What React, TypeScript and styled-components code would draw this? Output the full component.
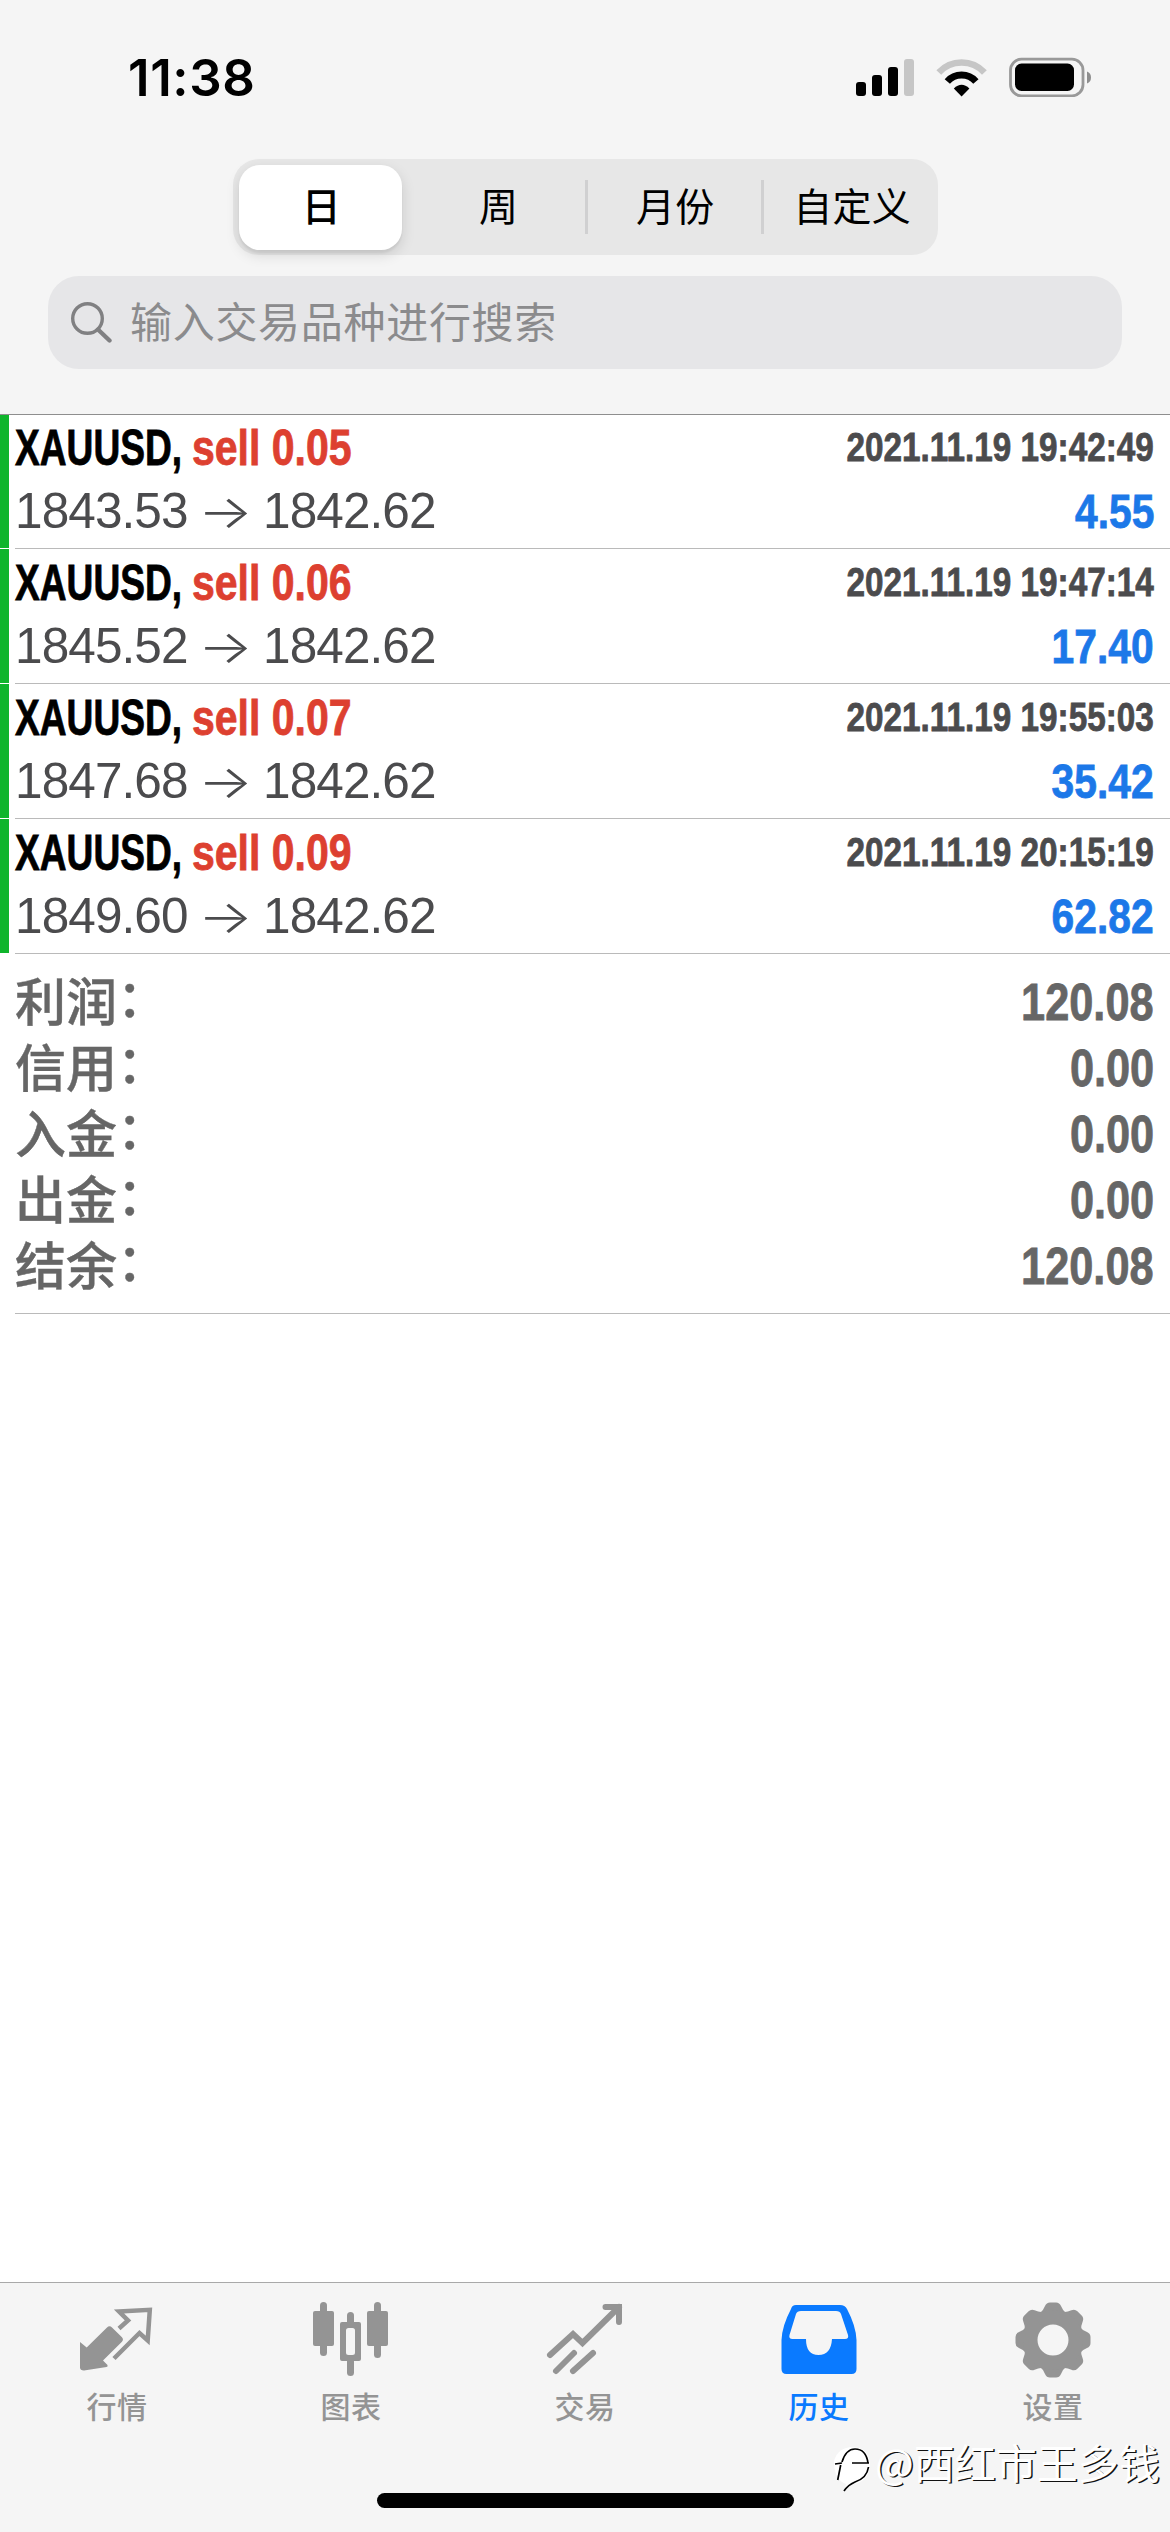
import React from "react";
import styled, { createGlobalStyle } from "styled-components";

const Global = createGlobalStyle`
  * { box-sizing: border-box; }
  body { margin: 0; background: #fff; }
`;

const latin = `"Liberation Sans", "Noto Sans CJK SC", sans-serif`;
const cjk = `"Noto Sans CJK SC", sans-serif`;

const Screen = styled.div`
  width: 1170px;
  height: 2532px;
  display: flex;
  flex-direction: column;
  background: #fff;
  font-family: ${cjk};
  overflow: hidden;
`;

const Header = styled.header`
  height: 414px;
  flex: none;
  display: flex;
  flex-direction: column;
  background: #f5f5f5;
  box-shadow: 0 1px 0 #8e8e8e;
  z-index: 1;
`;

const StatusBar = styled.div`
  height: 159px;
  padding: 46px 79px 0 128px;
  display: flex;
  justify-content: space-between;
  align-items: flex-start;
`;

const Clock = styled.span`
  font: 600 51px/64px Inter, sans-serif;
  letter-spacing: 0.6px;
  color: #000;
`;

const StatusIcons = styled.svg`
  width: 236px;
  height: 40px;
  margin-top: 11px;
`;

const Segments = styled.nav`
  width: 705px;
  height: 96px;
  margin-left: 233px;
  padding: 5px 6px;
  display: flex;
  align-items: center;
  background: #e7e7e7;
  border-radius: 26px;
`;

const Segment = styled.button<{ $active?: boolean; $width: number }>`
  width: ${(p) => p.$width}px;
  height: 85px;
  padding: 0 0 6px 2px;
  border: 0;
  border-radius: 21px;
  background: ${(p) => (p.$active ? "#fff" : "transparent")};
  box-shadow: ${(p) => (p.$active ? "0 5px 14px rgba(0,0,0,.13), 0 3px 2px rgba(0,0,0,.05)" : "none")};
  font: ${(p) => (p.$active ? 500 : 400)} 39px/79px ${cjk};
  letter-spacing: 0.3px;
  color: #000;
`;

const Divider = styled.i<{ $hidden?: boolean }>`
  width: 3px;
  height: 54px;
  margin: 0 6px;
  background: ${(p) => (p.$hidden ? "transparent" : "#d0d0d1")};
`;

const Search = styled.div`
  width: 1074px;
  height: 93px;
  margin: 21px 0 0 48px;
  padding-left: 23px;
  display: flex;
  align-items: center;
  gap: 18px;
  background: #e6e6e8;
  border-radius: 31px;
`;

const Placeholder = styled.span`
  padding-bottom: 6px;
  font-size: 42px;
  letter-spacing: 0.7px;
  color: #8b8b8d;
`;

const Deals = styled.main`
  flex: 1;
`;

const Deal = styled.section`
  height: 135px;
  padding: 6px 16px 0 15px;
  background:
    linear-gradient(#0fb52c, #0fb52c) left top / 9px 134px no-repeat,
    linear-gradient(#bababa, #bababa) left 15px bottom 0 / 100% 1px no-repeat;
  font-family: ${latin};
`;

const DealLine = styled.div<{ $h: number }>`
  height: ${(p) => p.$h}px;
  display: flex;
  align-items: baseline;
`;

const Squeeze = styled.span<{ $size: number; $x: number; $color: string; $w?: number; $end?: boolean; $lift?: number }>`
  display: block;
  width: ${(p) => (p.$w ? `${p.$w}px` : "auto")};
  margin-left: ${(p) => (p.$end ? "auto" : "0")};
  font: 700 ${(p) => p.$size}px/56px ${latin};
  color: ${(p) => p.$color};
  -webkit-text-stroke: 0.8px ${(p) => p.$color};
  white-space: nowrap;
  transform: translateY(${(p) => -(p.$lift ?? 0)}px) scaleX(${(p) => p.$x});
  transform-origin: ${(p) => (p.$end ? "right" : "left")} center;
`;

const Price = styled.span`
  width: 173px;
  font-size: 49.5px;
  line-height: 56px;
  letter-spacing: -0.9px;
  color: #4b4b4d;
`;

const Arrow = styled.span`
  width: 75px;
  text-align: center;
  font: 300 46px/56px Inter, sans-serif;
  color: #4b4b4d;
  transform: scaleX(1.25);
`;

const Summary = styled.section`
  height: 360px;
  margin-left: 15px;
  padding: 15px 16px 0 0;
  border-bottom: 1px solid #bababa;
`;

const SummaryRow = styled.div`
  height: 66px;
  display: flex;
  align-items: center;
`;

const SummaryLabel = styled.span`
  padding-top: 3px;
  font: 500 51px/60px ${latin};
  color: #666;
  -webkit-text-stroke: 0.4px #666;
`;

const Colon = styled.span`
  display: inline-block;
  transform: translate(0, -4px);
`;

const TabBar = styled.footer`
  height: 250px;
  flex: none;
  display: flex;
  flex-direction: column;
  align-items: center;
  justify-content: space-between;
  padding-bottom: 24px;
  border-top: 1px solid #a9a9a9;
  background: #f5f5f5;
`;

const Tabs = styled.nav`
  width: 100%;
  display: grid;
  grid-template-columns: repeat(5, 1fr);
`;

const Tab = styled.a<{ $active?: boolean }>`
  padding-top: 17px;
  display: flex;
  flex-direction: column;
  align-items: center;
  color: ${(p) => (p.$active ? "#0a7aff" : "#949494")};
  font: 500 30px/44px ${cjk};
  letter-spacing: 0.6px;

  svg { width: 80px; height: 80px; margin-bottom: 3px; }
`;

const HomeIndicator = styled.div`
  width: 417px;
  height: 15px;
  border-radius: 8px;
  background: #000;
`;

const Watermark = styled.div`
  position: absolute;
  left: 830px;
  top: 2434px;
  display: flex;
  align-items: flex-start;
  gap: 3px;
  font: 400 41px/54px ${cjk};
  color: #fff;
  text-shadow: 1.4px 1.4px 0 #111;
  white-space: nowrap;
`;

const segments = [
  { label: "日", width: 163 },
  { label: "周", width: 162 },
  { label: "月份", width: 162 },
  { label: "自定义", width: 162 },
];

const deals = [
  { lot: "0.05", time: "2021.11.19 19:42:49", open: "1843.53", profit: "4.55" },
  { lot: "0.06", time: "2021.11.19 19:47:14", open: "1845.52", profit: "17.40" },
  { lot: "0.07", time: "2021.11.19 19:55:03", open: "1847.68", profit: "35.42" },
  { lot: "0.09", time: "2021.11.19 20:15:19", open: "1849.60", profit: "62.82" },
];

const totals = [
  ["利润", "120.08"],
  ["信用", "0.00"],
  ["入金", "0.00"],
  ["出金", "0.00"],
  ["结余", "120.08"],
];

const QuotesIcon = () => (
  <svg viewBox="0 0 80 80" fill="currentColor">
    <path d="M3 42 9.700 47.500 30 27.500q2.500-2.500 5 0L44.700 37q2.500 2.500 0 5L26 60.500l4.500 4.500q.5 2-1 2L7 70.500q-4 0-4-3Z" />
    <path d="M42 28.500 51 20.500 42 11.500 72.800 9.800 70.700 40.500 62.500 33 37 58.500" fill="none" stroke="currentColor" strokeWidth="4.500" />
  </svg>
);

const ChartIcon = () => (
  <svg viewBox="0 0 80 80" fill="currentColor">
    <rect x="2" y="11" width="21" height="35" rx="2" />
    <rect x="9" y="2" width="7" height="54" rx="3.500" />
    <rect x="56" y="11" width="21" height="35" rx="2" />
    <rect x="63" y="2" width="7" height="56" rx="3.500" />
    <rect x="36" y="12" width="7" height="14" rx="3.500" />
    <rect x="36" y="58" width="7" height="18" rx="3.500" />
    <path fillRule="evenodd" d="M31 22H48a2 2 0 0 1 2 2V59a2 2 0 0 1-2 2H31a2 2 0 0 1-2-2V24a2 2 0 0 1 2-2ZM37.500 28a2.500 2.500 0 0 0-2.500 2.500V52.500a2.500 2.500 0 0 0 2.500 2.500h4a2.500 2.500 0 0 0 2.500-2.500V30.500a2.500 2.500 0 0 0-2.500-2.500Z" />
  </svg>
);

const TradeIcon = () => (
  <svg viewBox="0 0 80 80" fill="none" stroke="currentColor" strokeWidth="6" strokeLinecap="round">
    <path d="M5 55 28 34 37.500 43 74 7M60.500 7H74V22" />
    <path d="M11 71 29 53M28 71 48 53" />
  </svg>
);

const HistoryIcon = () => (
  <svg viewBox="0 0 80 80" fill="currentColor">
    <path fillRule="evenodd" d="M17 5H61q5 0 7 4Q77 26 77.500 40V69q0 5-5 5H7.500q-5 0-5-5V40Q3 26 12 9q1-4 5-4ZM22 11q-4 0-5 3L10.500 35q-1 4 3 4H27Q27 55 39.500 55T53 39H66q4 0 3-4L62 14q-1-3-5-3Z" />
  </svg>
);

const SettingsIcon = () => (
  <svg viewBox="-40 -40 80 80" fill="currentColor">
    {[0, 45, 90, 135, 180, 225, 270, 315].map((a) => (
      <path key={a} transform={`rotate(${a})`} d="M-13-27Q-10-29-8-34-6.500-37.500-3-37.500H3Q6.500-37.500 8-34 10-29 13-27Z" />
    ))}
    <path fillRule="evenodd" d="M0-30A30 30 0 1 0 0 30 30 30 0 1 0 0-30ZM0-15.500A15.500 15.500 0 1 1 0 15.500 15.500 15.500 0 1 1 0-15.500Z" />
  </svg>
);

const tabs = [
  { label: "行情", Icon: QuotesIcon },
  { label: "图表", Icon: ChartIcon },
  { label: "交易", Icon: TradeIcon },
  { label: "历史", Icon: HistoryIcon },
  { label: "设置", Icon: SettingsIcon },
];

export default function App() {
  return (
    <Screen>
      <Global />
      <Header>
        <StatusBar>
          <Clock>11:38</Clock>
          <StatusIcons viewBox="855 57 236 40">
            <rect x="856" y="82" width="10" height="14" rx="3" />
            <rect x="872" y="75" width="10" height="21" rx="3" />
            <rect x="888" y="67" width="10" height="29" rx="3" />
            <rect x="904" y="59" width="10" height="37" rx="3" fill="#c6c6c6" />
            <path d="M938.800 72.500A31 31 0 0 1 984.400 72.500" fill="none" stroke="#c6c6c6" strokeWidth="6.500" />
            <path d="M947.300 81.500A19 19 0 0 1 975.900 81.500" fill="none" stroke="#000" strokeWidth="7" />
            <path d="M953.800 88.500Q961.600 81 969.400 88.500L961.600 96.500Z" />
            <rect x="1010.500" y="59.200" width="72.500" height="36.600" rx="11" fill="none" stroke="#999" strokeWidth="2.800" />
            <rect x="1015" y="63.500" width="59" height="27.500" rx="6.500" />
            <path d="M1087 71.500Q1091 73 1091 77.500T1087 83.500Z" fill="#8e8e8e" />
          </StatusIcons>
        </StatusBar>
        <Segments>
          {segments.map((s, i) => (
            <React.Fragment key={s.label}>
              {i > 0 && <Divider $hidden={i === 1} />}
              <Segment $width={s.width} $active={i === 0}>{s.label}</Segment>
            </React.Fragment>
          ))}
        </Segments>
        <Search>
          <svg width="41" height="41" viewBox="0 0 41 41" fill="none" stroke="#808082">
            <circle cx="16.500" cy="16.500" r="14.800" strokeWidth="3.400" />
            <path d="M27 27.500 38.500 38.500" strokeWidth="4.400" strokeLinecap="round" />
          </svg>
          <Placeholder>输入交易品种进行搜索</Placeholder>
        </Search>
      </Header>

      <Deals>
        {deals.map((d) => (
          <Deal key={d.time}>
            <DealLine $h={63}>
              <Squeeze $size={49.5} $x={0.75} $w={177} $color="#000">XAUUSD,</Squeeze>
              <Squeeze $size={49.5} $x={0.828} $color="#dd4030">sell {d.lot}</Squeeze>
              <Squeeze $size={40.5} $x={0.822} $lift={4} $color="#4b4b4d" $end>{d.time}</Squeeze>
            </DealLine>
            <DealLine $h={56}>
              <Price>{d.open}</Price>
              <Arrow>→</Arrow>
              <Price>1842.62</Price>
              <Squeeze $size={49} $x={0.832} $color="#1c78e8" $end>{d.profit}</Squeeze>
            </DealLine>
          </Deal>
        ))}
        <Summary>
          {totals.map(([label, value]) => (
            <SummaryRow key={label}>
              <SummaryLabel>{label}<Colon>：</Colon></SummaryLabel>
              <Squeeze $size={52.5} $x={0.825} $color="#666" $end>{value}</Squeeze>
            </SummaryRow>
          ))}
        </Summary>
      </Deals>

      <TabBar>
        <Tabs>
          {tabs.map(({ label, Icon }) => (
            <Tab key={label} $active={label === "历史"}>
              <Icon />
              {label}
            </Tab>
          ))}
        </Tabs>
        <HomeIndicator />
      </TabBar>
      <Watermark>
        <svg width="42" height="60" viewBox="0 0 42 60">
          <path d="M4 27Q8 13 23 13 39 14 40 30 40 44 28 49 20 50 14 58L16 50Q4 46 4 27Z" fill="#fff" />
          <path d="M12 28Q16 15 25 15 36 15 38 29M22 29H39M38.500 33Q37 44 25 48 18 51 14 57M5 30 12 29M10.700 31 7.700 46" fill="none" stroke="#000" strokeWidth="1.700" />
        </svg>
        @西红市王多钱
      </Watermark>
    </Screen>
  );
}
